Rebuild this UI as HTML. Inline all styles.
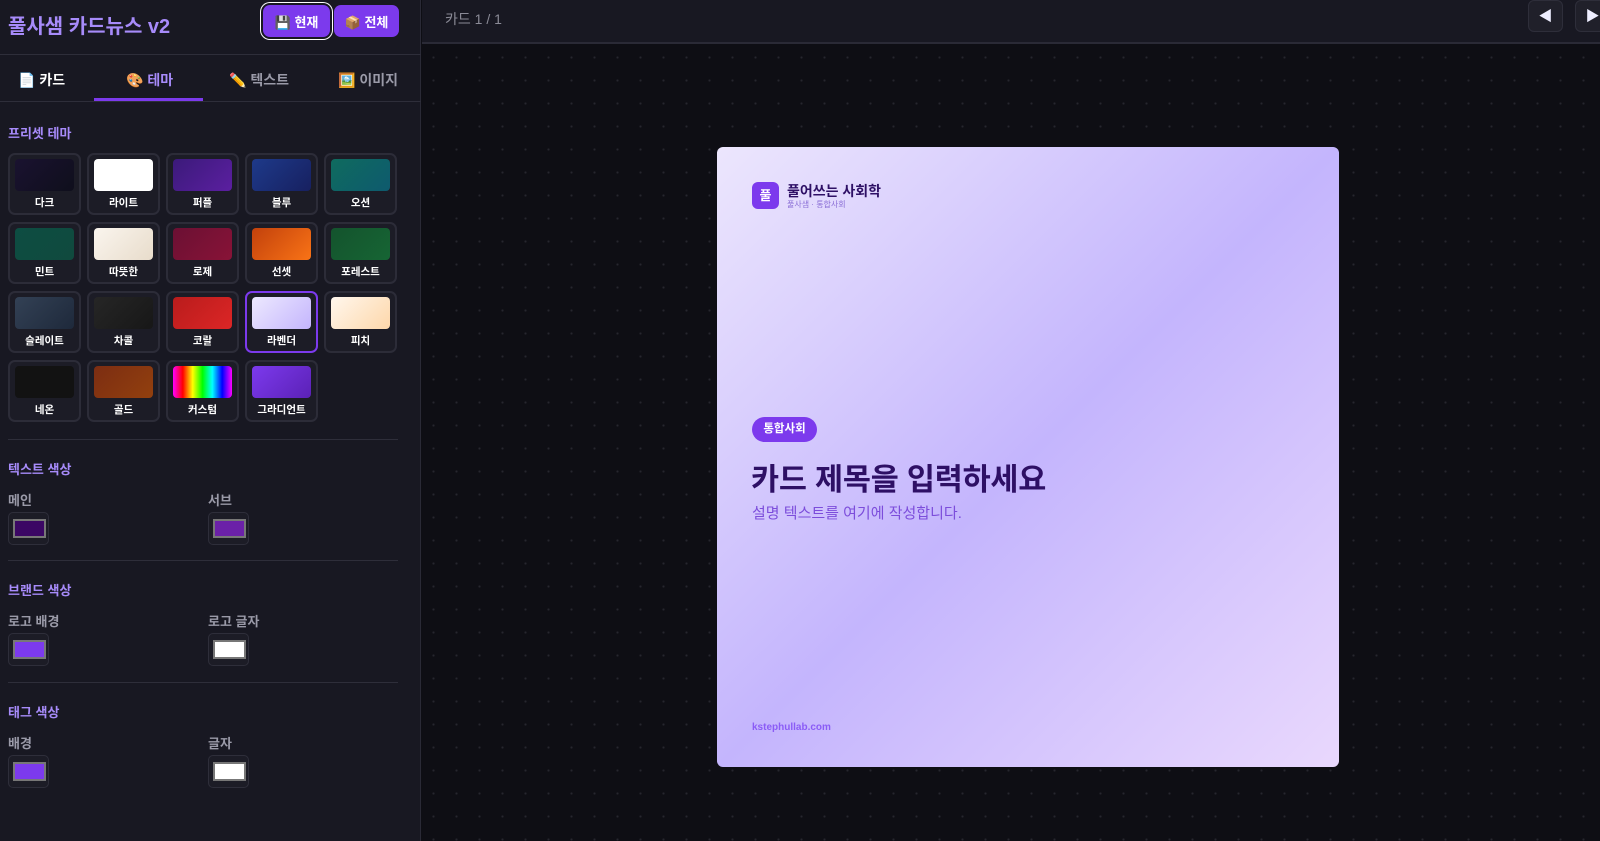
<!DOCTYPE html>
<html><head><meta charset="utf-8"><style>
*{box-sizing:border-box;margin:0;padding:0}
body{width:1600px;height:841px;overflow:hidden;background:#0e0e14;font-family:"Liberation Sans","Noto Sans CJK KR",sans-serif;position:relative}
.side{position:absolute;left:0;top:0;width:421px;height:841px;background:#181822;border-right:1px solid #2a2a36}
.ab{position:absolute}
.h{color:#a78bfa;font-weight:700}
.btn{position:absolute;top:5px;height:32px;background:#7c3aed;border-radius:7px;color:#fff;font-weight:700;font-size:13px;display:flex;align-items:center;justify-content:center;gap:6px}
.line{position:absolute;left:8px;width:390px;height:1px;background:#2e2e3a}
.tab{position:absolute;top:70px;font-size:14px;font-weight:700;color:#9a9aa8}
.tile{position:absolute;width:73px;height:62px;border:2px solid #2c2c38;border-radius:7px;background:#1c1c26}
.tile .p{position:absolute;left:5px;top:4px;width:59px;height:32px;border-radius:4px}
.tile .l{position:absolute;left:0;right:0;top:40px;text-align:center;color:#fff;font-size:10.5px;font-weight:700}
.lab{position:absolute;font-size:13px;color:#9a9aa8;font-weight:700}
.sw{position:absolute;width:41px;height:33px;border:1px solid #2e2e3a;border-radius:5px;background:#1c1c26}
.sw i{position:absolute;left:4px;top:6px;width:33px;height:19px;border:2px solid #777}
.main{position:absolute;left:422px;top:0;right:0;bottom:0;background-color:#0e0e14;background-image:radial-gradient(#26262e 1px,transparent 1.2px);background-size:23px 23px}
</style></head><body>
<div class="main">
 <div class="ab" style="left:0;top:0;right:0;height:44px;background:#181822;border-bottom:2px solid #2a2a36"></div>
 <div class="ab" style="left:23px;top:9px;color:#8a8a96;font-size:14px">카드 1 / 1</div>
 <div class="ab" style="left:1106px;top:0;width:35px;height:32px;background:#20202a;border:1px solid #2e2e3a;border-radius:6px;color:#eef;font-size:14px;text-align:center;line-height:30px">◀</div>
 <div class="ab" style="left:1153px;top:0;width:35px;height:32px;background:#20202a;border:1px solid #2e2e3a;border-radius:6px;color:#eef;font-size:14px;text-align:center;line-height:30px">▶</div>
 <div class="ab" style="left:295px;top:147px;width:622px;height:620px;border-radius:6px;background:linear-gradient(135deg,#ece6fd 0%,#c4b5fd 50%,#e9d8fd 100%)">
  <div class="ab" style="left:35px;top:35px;width:27px;height:27px;border-radius:6px;background:#7c3aed;color:#fff;font-weight:700;font-size:13px;text-align:center;line-height:27px">풀</div>
  <div class="ab" style="left:70px;top:34px;font-size:14px;font-weight:700;color:#2e1065">풀어쓰는 사회학</div>
  <div class="ab" style="left:70px;top:52px;font-size:8px;color:#8b6fd6">풀사샘 · 통합사회</div>
  <div class="ab" style="left:35px;top:270px;width:65px;height:25px;border-radius:13px;background:#7c3aed;color:#fff;font-size:11.5px;font-weight:700;text-align:center;line-height:25px">통합사회</div>
  <div class="ab" style="left:34px;top:308px;font-size:30.5px;font-weight:700;color:#2e1065;letter-spacing:-0.2px">카드 제목을 입력하세요</div>
  <div class="ab" style="left:35px;top:355px;font-size:15px;color:#7c4ddb">설명 텍스트를 여기에 작성합니다.</div>
  <div class="ab" style="left:35px;top:575px;font-size:10px;font-weight:700;color:#8b5cf6">kstephullab.com</div>
 </div>
</div>
<div class="side">
 <div class="ab h" style="left:8px;top:10px;font-size:20px">풀사샘 카드뉴스 v2</div>
 <div class="btn" style="left:263px;width:67px;box-shadow:0 0 0 2px #181822,0 0 0 3px #fff">💾 현재</div>
 <div class="btn" style="left:334px;width:65px">📦 전체</div>
 <div class="ab" style="left:0;top:54px;width:421px;height:1px;background:#2e2e3a"></div>
 <div class="tab" style="left:18px;color:#fff">📄 카드</div>
 <div class="tab" style="left:126px;color:#a78bfa">🎨 테마</div>
 <div class="tab" style="left:229px">✏️ 텍스트</div>
 <div class="tab" style="left:338px">🖼️ 이미지</div>
 <div class="ab" style="left:94px;top:98px;width:109px;height:3px;background:#7c3aed"></div>
 <div class="ab" style="left:0;top:101px;width:421px;height:1px;background:#2e2e3a"></div>
 <div class="ab h" style="left:8px;top:123px;font-size:13px">프리셋 테마</div>
 <div class="tile" style="left:8px;top:153px"><div class="p" style="background:linear-gradient(135deg,#1a1230,#0f0f1c)"></div><div class="l">다크</div></div>
 <div class="tile" style="left:87px;top:153px"><div class="p" style="background:#fff"></div><div class="l">라이트</div></div>
 <div class="tile" style="left:166px;top:153px"><div class="p" style="background:linear-gradient(135deg,#3b1a7a,#5b1fa0)"></div><div class="l">퍼플</div></div>
 <div class="tile" style="left:245px;top:153px"><div class="p" style="background:linear-gradient(135deg,#1e3a8a,#172060)"></div><div class="l">블루</div></div>
 <div class="tile" style="left:324px;top:153px"><div class="p" style="background:linear-gradient(135deg,#0f6b5e,#0e5a6e)"></div><div class="l">오션</div></div>
 <div class="tile" style="left:8px;top:222px"><div class="p" style="background:linear-gradient(135deg,#0d4d42,#104a3e)"></div><div class="l">민트</div></div>
 <div class="tile" style="left:87px;top:222px"><div class="p" style="background:linear-gradient(135deg,#faf5ee,#e8dccb)"></div><div class="l">따뜻한</div></div>
 <div class="tile" style="left:166px;top:222px"><div class="p" style="background:linear-gradient(135deg,#6b1033,#881337)"></div><div class="l">로제</div></div>
 <div class="tile" style="left:245px;top:222px"><div class="p" style="background:linear-gradient(135deg,#c2410c,#f97316)"></div><div class="l">선셋</div></div>
 <div class="tile" style="left:324px;top:222px"><div class="p" style="background:linear-gradient(135deg,#14532d,#166534)"></div><div class="l">포레스트</div></div>
 <div class="tile" style="left:8px;top:291px"><div class="p" style="background:linear-gradient(135deg,#334155,#1e293b)"></div><div class="l">슬레이트</div></div>
 <div class="tile" style="left:87px;top:291px"><div class="p" style="background:linear-gradient(135deg,#262626,#171717)"></div><div class="l">차콜</div></div>
 <div class="tile" style="left:166px;top:291px"><div class="p" style="background:linear-gradient(135deg,#b91c1c,#dc2626)"></div><div class="l">코랄</div></div>
 <div class="tile" style="left:245px;top:291px;border-color:#7c3aed"><div class="p" style="background:linear-gradient(135deg,#ede9fe,#c4b5fd)"></div><div class="l">라벤더</div></div>
 <div class="tile" style="left:324px;top:291px"><div class="p" style="background:linear-gradient(135deg,#fff7ed,#fed7aa)"></div><div class="l">피치</div></div>
 <div class="tile" style="left:8px;top:360px"><div class="p" style="background:#121212"></div><div class="l">네온</div></div>
 <div class="tile" style="left:87px;top:360px"><div class="p" style="background:linear-gradient(135deg,#7c2d12,#92400e)"></div><div class="l">골드</div></div>
 <div class="tile" style="left:166px;top:360px"><div class="p" style="background:linear-gradient(90deg,#f0f,#f00,#ff0,#0f0,#0ff,#00f,#f0f)"></div><div class="l">커스텀</div></div>
 <div class="tile" style="left:245px;top:360px"><div class="p" style="background:linear-gradient(135deg,#7c3aed,#5b21b6)"></div><div class="l">그라디언트</div></div>
 <div class="line" style="top:439px"></div>
 <div class="ab h" style="left:8px;top:459px;font-size:13px">텍스트 색상</div>
 <div class="lab" style="left:8px;top:490px">메인</div><div class="lab" style="left:208px;top:490px">서브</div>
 <div class="sw" style="left:8px;top:512px"><i style="background:#3b0764"></i></div>
 <div class="sw" style="left:208px;top:512px"><i style="background:#6b21a8"></i></div>
 <div class="line" style="top:560px"></div>
 <div class="ab h" style="left:8px;top:580px;font-size:13px">브랜드 색상</div>
 <div class="lab" style="left:8px;top:611px">로고 배경</div><div class="lab" style="left:208px;top:611px">로고 글자</div>
 <div class="sw" style="left:8px;top:633px"><i style="background:#7c3aed"></i></div>
 <div class="sw" style="left:208px;top:633px"><i style="background:#fff"></i></div>
 <div class="line" style="top:682px"></div>
 <div class="ab h" style="left:8px;top:702px;font-size:13px">태그 색상</div>
 <div class="lab" style="left:8px;top:733px">배경</div><div class="lab" style="left:208px;top:733px">글자</div>
 <div class="sw" style="left:8px;top:755px"><i style="background:#7c3aed"></i></div>
 <div class="sw" style="left:208px;top:755px"><i style="background:#fff"></i></div>
</div>
</body></html>
